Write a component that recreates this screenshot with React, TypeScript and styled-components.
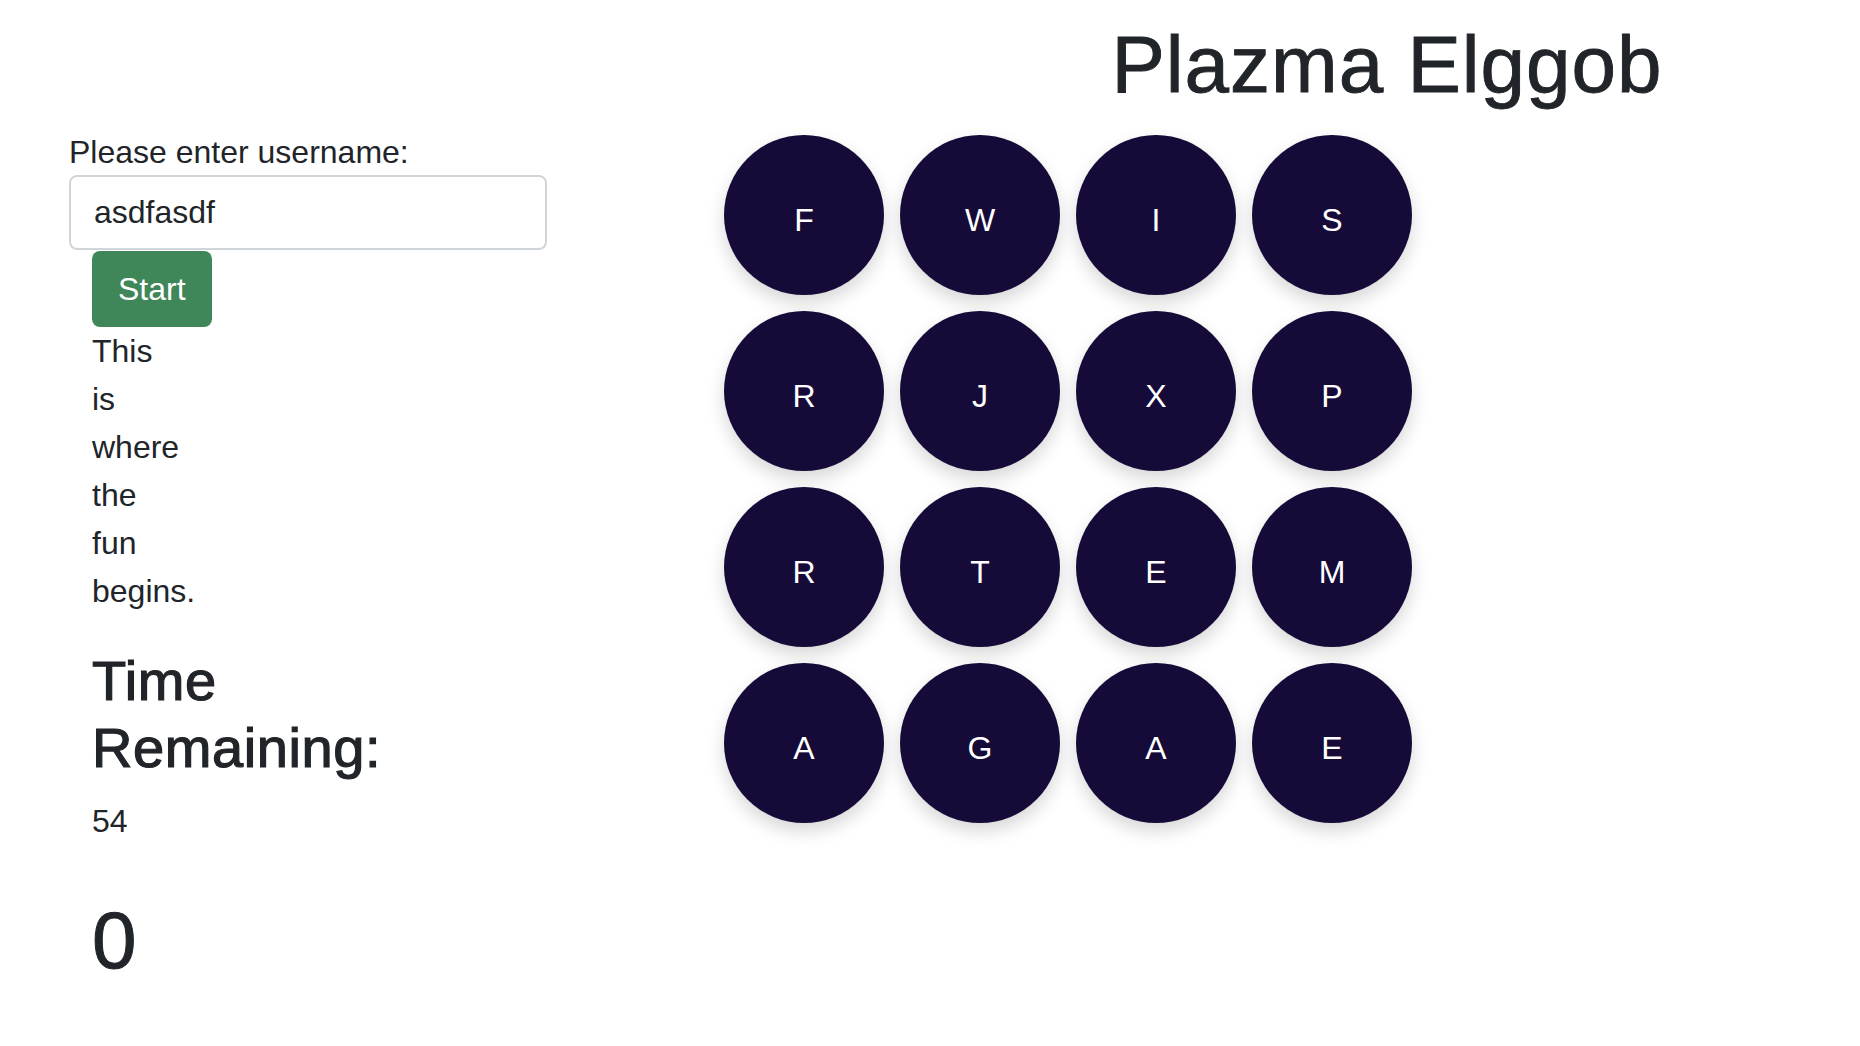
import React from "react";
import styled, { createGlobalStyle } from "styled-components";

const GlobalStyle = createGlobalStyle`
  *, *::before, *::after { box-sizing: border-box; }
  html, body { margin: 0; padding: 0; background: #ffffff; }
  body {
    font-family: "Liberation Sans", Arial, Helvetica, sans-serif;
    font-size: 32px;
    line-height: 1.5;
    color: #212529;
  }
`;

const Page = styled.div`
  width: 1860px;
  min-height: 1046px;
`;

const Header = styled.header`
  display: grid;
  grid-template-columns: 1fr 1fr;
  padding-top: 17px;
`;

const Title = styled.h1`
  grid-column: 2;
  margin: 0 0 15px;
  padding-right: 16px;
  text-align: center;
  font-size: 80px;
  font-weight: 500;
  line-height: 1.2;
  letter-spacing: 1px;
  -webkit-text-stroke: 0.9px #212529;
`;

const Main = styled.main`
  display: flex;
  align-items: flex-start;
  padding-left: 69px;
`;

const LeftCol = styled.section`
  width: 478px;
  display: flex;
  flex-direction: column;
`;

const Label = styled.label`
  display: block;
  line-height: 48px;
`;

const TextInput = styled.input`
  display: block;
  width: 100%;
  height: 75px;
  margin-top: -1px;
  padding: 0 23px;
  font-family: inherit;
  font-size: 32px;
  color: #212529;
  background: #fff;
  border: 2px solid #d0d5da;
  border-radius: 8px;
  outline: none;
`;

const Inner = styled.div`
  padding-left: 23px;
  display: flex;
  flex-direction: column;
  align-items: flex-start;
`;

const StartButton = styled.button`
  height: 76px;
  margin-top: 1px;
  padding: 0 26px;
  font-family: inherit;
  font-size: 32px;
  line-height: 1.5;
  color: #ffffff;
  background: #3f8659;
  border: none;
  border-radius: 8px;
  cursor: pointer;
`;

const FunText = styled.p`
  width: 80px;
  margin: 0 0 32px;
`;

const TimeHeading = styled.h3`
  max-width: 380px;
  margin: 0 0 16px;
  font-size: 56px;
  font-weight: 500;
  line-height: 1.2;
  letter-spacing: 0.6px;
  -webkit-text-stroke: 1.2px #212529;
`;

const Seconds = styled.p`
  margin: 0 0 32px;
`;

const Score = styled.h1`
  margin: 16px 0 0;
  font-size: 80px;
  font-weight: 500;
  line-height: 1.2;
  -webkit-text-stroke: 1px #212529;
`;

const Board = styled.div`
  margin-left: 177px;
  padding-top: 7px;
  display: grid;
  grid-template-columns: repeat(4, 160px);
  grid-auto-rows: 160px;
  gap: 16px;
`;

const Die = styled.button`
  width: 160px;
  height: 160px;
  padding: 10px 0 0;
  display: flex;
  align-items: center;
  justify-content: center;
  border: none;
  border-radius: 50%;
  background: #160b38;
  color: #ffffff;
  font-family: inherit;
  font-size: 32px;
  line-height: 1.5;
  box-shadow: 0 8px 18px rgba(0, 0, 0, 0.16);
  cursor: pointer;
`;

const letters = ["F", "W", "I", "S", "R", "J", "X", "P", "R", "T", "E", "M", "A", "G", "A", "E"];

export default function App() {
  return (
    <Page>
      <GlobalStyle />
      <Header>
        <Title>Plazma Elggob</Title>
      </Header>
      <Main>
        <LeftCol>
          <Label htmlFor="username">Please enter username:</Label>
          <TextInput id="username" defaultValue="asdfasdf" />
          <Inner>
            <StartButton>Start</StartButton>
            <FunText>This is where the fun begins.</FunText>
            <TimeHeading>Time Remaining:</TimeHeading>
            <Seconds>54</Seconds>
            <Score>0</Score>
          </Inner>
        </LeftCol>
        <Board>
          {letters.map((l, i) => (
            <Die key={i}>{l}</Die>
          ))}
        </Board>
      </Main>
    </Page>
  );
}
